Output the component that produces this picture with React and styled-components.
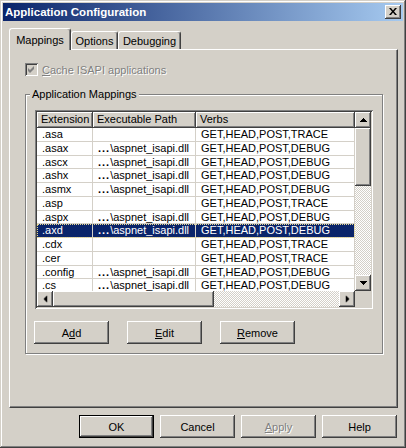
import React from "react";
import styled, { createGlobalStyle } from "styled-components";

const FACE = "#d4d0c8";
const SHADOW = "#808080";
const DARK = "#404040";
const HILITE = "#ffffff";
const SELECT = "#0a246a";

const GlobalStyle = createGlobalStyle`
  html, body {
    margin: 0;
    padding: 0;
    background: ${FACE};
  }
  body {
    font-family: "Liberation Sans", Arial, sans-serif;
    font-size: 11px;
    color: #000;
  }
  * {
    box-sizing: border-box;
  }
`;

const raised = `
  box-shadow: inset -1px -1px ${DARK}, inset 1px 1px ${HILITE}, inset -2px -2px ${SHADOW}, inset 2px 2px ${FACE};
`;

const sunken = `
  box-shadow: inset 1px 1px ${SHADOW}, inset -1px -1px ${HILITE}, inset 2px 2px ${DARK}, inset -2px -2px ${FACE};
`;

const checker = `
  background: repeating-conic-gradient(${FACE} 0 25%, ${HILITE} 0 50%) 0 0 / 2px 2px;
`;

const Window = styled.div`
  width: 406px;
  height: 448px;
  padding: 3px;
  background: ${FACE};
  box-shadow: inset -1px -1px ${DARK}, inset 1px 1px ${FACE}, inset -2px -2px ${SHADOW}, inset 2px 2px ${HILITE};
  display: flex;
  flex-direction: column;
`;

const TitleBar = styled.div`
  height: 18px;
  display: flex;
  align-items: center;
  justify-content: space-between;
  padding: 0 2px;
  background: linear-gradient(to right, #0a246a, #a6caf0);
`;

const TitleText = styled.span`
  color: #fff;
  font-weight: bold;
  font-size: 11.5px;
`;

const CloseButton = styled.div`
  width: 16px;
  height: 14px;
  background: ${FACE};
  ${raised}
  display: flex;
  align-items: center;
  justify-content: center;
  padding-bottom: 1px;
`;

const TabStrip = styled.div`
  display: flex;
  align-items: flex-end;
  height: 21px;
  margin: 7px 0 0 6px;
  position: relative;
  z-index: 1;
`;

const Tab = styled.div`
  width: ${(p) => p.$w}px;
  height: ${(p) => (p.$active ? 22 : 18)}px;
  margin-bottom: ${(p) => (p.$active ? -1 : 0)}px;
  padding-top: ${(p) => (p.$active ? 0 : 1)}px;
  display: flex;
  align-items: center;
  justify-content: center;
  background: ${FACE};
  border-top: 1px solid ${HILITE};
  border-left: 1px solid ${HILITE};
  border-right: 1px solid ${DARK};
  border-radius: 3px 3px 0 0;
  box-shadow: inset -1px 0 ${SHADOW};
`;

const Panel = styled.div`
  width: 389px;
  height: 359px;
  margin-left: 6px;
  border: 1px solid;
  border-color: ${HILITE} ${DARK} ${DARK} ${HILITE};
  box-shadow: inset -1px -1px ${SHADOW};
  padding: 13px 0 0 15px;
`;

const CheckRow = styled.label`
  display: flex;
  align-items: center;
  gap: 4px;
  height: 13px;
  color: ${SHADOW};
  text-shadow: 1px 1px ${HILITE};
`;

const CheckBox = styled.span`
  width: 13px;
  height: 13px;
  flex-shrink: 0;
  background: ${FACE};
  ${sunken}
  display: flex;
  align-items: center;
  justify-content: center;
`;

const GroupBox = styled.fieldset`
  margin: 12px 0 0 0;
  width: 358px;
  min-inline-size: 0;
  padding: 9px;
  border: 1px solid ${SHADOW};
  box-shadow: inset 1px 1px ${HILITE}, 1px 1px ${HILITE};
`;

const GroupLabel = styled.legend`
  padding: 0 2px;
  margin-left: -5px;
  line-height: 13px;
  background: ${FACE};
`;

const ListView = styled.div`
  width: 338px;
  height: 199px;
  padding: 2px;
  background: ${FACE};
  ${sunken}
  display: grid;
  grid-template-columns: 1fr 16px;
  grid-template-rows: 1fr 16px;
`;

const ListBody = styled.div`
  background: #fff;
  overflow: hidden;
  min-width: 0;
  min-height: 0;
`;

const columns = "56px 103px 1fr";

const HeaderRow = styled.div`
  display: grid;
  grid-template-columns: ${columns};
  height: 16px;
`;

const HeaderCell = styled.div`
  background: ${FACE};
  box-shadow: inset -1px -1px ${DARK}, inset 1px 1px ${HILITE}, inset -2px -2px ${SHADOW};
  padding-left: 4px;
  line-height: 15px;
  white-space: nowrap;
  overflow: hidden;
`;

const Row = styled.div`
  display: grid;
  grid-template-columns: ${columns};
  height: 13.75px;
  background: ${(p) => (p.$selected ? SELECT : "#fff")};
  color: ${(p) => (p.$selected ? "#fff" : "#000")};
  outline: ${(p) => (p.$selected ? "1px dotted #e6d890" : "none")};
  outline-offset: -1px;
`;

const Cell = styled.div`
  padding-left: 5px;
  border-right: 1px solid ${FACE};
  border-bottom: 1px solid ${FACE};
  line-height: 12.75px;
  white-space: nowrap;
  overflow: hidden;
`;

const Dots = styled.span`
  font-weight: bold;
  letter-spacing: 1px;
`;

const VScroll = styled.div`
  display: flex;
  flex-direction: column;
  ${checker}
`;

const HScroll = styled.div`
  display: flex;
  ${checker}
`;

const Corner = styled.div`
  background: ${FACE};
`;

const ScrollButton = styled.div`
  width: 16px;
  height: 16px;
  flex-shrink: 0;
  background: ${FACE};
  ${raised}
  display: flex;
  align-items: center;
  justify-content: center;
`;

const Thumb = styled.div`
  flex-shrink: 0;
  background: ${FACE};
  ${raised}
  ${(p) => (p.$vertical ? `height: ${p.$size}px;` : `width: ${p.$size}px;`)}
`;

const Track = styled.div`
  flex: 1;
`;

const ButtonRow = styled.div`
  display: flex;
  gap: ${(p) => p.$gap}px;
  justify-content: ${(p) => (p.$end ? "flex-end" : "flex-start")};
  margin: ${(p) => p.$margin};
`;

const Button = styled.div`
  width: 75px;
  height: 23px;
  display: flex;
  align-items: center;
  justify-content: center;
  background: ${FACE};
  border: ${(p) => (p.$default ? "1px solid #000" : "none")};
  ${raised}
  color: ${(p) => (p.$disabled ? SHADOW : "#000")};
  text-shadow: ${(p) => (p.$disabled ? `1px 1px ${HILITE}` : "none")};
`;

const Arrow = ({ dir = "up" }) => {
  const rot = { up: 0, right: 90, down: 180, left: 270 }[dir];
  return (
    <svg width="7" height="4" viewBox="0 0 7 4" style={{ transform: `rotate(${rot}deg)` }}>
      <path d="M3 0h1v1h1v1h1v1h1v1H0V3h1V2h1V1h1z" fill="#000" />
    </svg>
  );
};

const CloseGlyph = () => (
  <svg width="8" height="7" viewBox="0 0 8 7">
    <path d="M0 0h2l2 2.4L6 0h2L5 3.5 8 7H6L4 4.6 2 7H0l3-3.5z" fill="#000" />
  </svg>
);

const CheckGlyph = () => (
  <svg width="7" height="7" viewBox="0 0 7 7">
    <path d="M0 2l2 2 4-4v3L2 7 0 5z" fill={SHADOW} />
  </svg>
);

const PATH = (
  <>
    <Dots>...</Dots>\aspnet_isapi.dll
  </>
);
const TRACE = "GET,HEAD,POST,TRACE";
const DEBUG = "GET,HEAD,POST,DEBUG";

const mappings = [
  [".asa", false, TRACE],
  [".asax", true, DEBUG],
  [".ascx", true, DEBUG],
  [".ashx", true, DEBUG],
  [".asmx", true, DEBUG],
  [".asp", false, TRACE],
  [".aspx", true, DEBUG],
  [".axd", true, DEBUG, true],
  [".cdx", false, TRACE],
  [".cer", false, TRACE],
  [".config", true, DEBUG],
  [".cs", true, DEBUG],
];

export default function App() {
  return (
    <>
      <GlobalStyle />
      <Window>
        <TitleBar>
          <TitleText>Application Configuration</TitleText>
          <CloseButton>
            <CloseGlyph />
          </CloseButton>
        </TitleBar>

        <TabStrip>
          <Tab $active $w={62}>Mappings</Tab>
          <Tab $w={47}>Options</Tab>
          <Tab $w={63}>Debugging</Tab>
        </TabStrip>

        <Panel>
          <CheckRow>
            <CheckBox>
              <CheckGlyph />
            </CheckBox>
            <span>
              <u>C</u>ache ISAPI applications
            </span>
          </CheckRow>

          <GroupBox>
            <GroupLabel>Application Mappings</GroupLabel>
            <ListView>
              <ListBody>
                <HeaderRow>
                  <HeaderCell>Extension</HeaderCell>
                  <HeaderCell>Executable Path</HeaderCell>
                  <HeaderCell>Verbs</HeaderCell>
                </HeaderRow>
                {mappings.map(([ext, hasPath, verbs, selected]) => (
                  <Row key={ext} $selected={selected}>
                    <Cell>{ext}</Cell>
                    <Cell>{hasPath ? PATH : ""}</Cell>
                    <Cell>{verbs}</Cell>
                  </Row>
                ))}
              </ListBody>
              <VScroll>
                <ScrollButton>
                  <Arrow dir="up" />
                </ScrollButton>
                <Thumb $vertical $size={58} />
                <Track />
                <ScrollButton>
                  <Arrow dir="down" />
                </ScrollButton>
              </VScroll>
              <HScroll>
                <ScrollButton>
                  <Arrow dir="left" />
                </ScrollButton>
                <Thumb $size={161} />
                <Track />
                <ScrollButton>
                  <Arrow dir="right" />
                </ScrollButton>
              </HScroll>
              <Corner />
            </ListView>

            <ButtonRow $gap={18} $margin="12px 0 0 -1px">
              <Button>
                A<u>d</u>d
              </Button>
              <Button>
                <u>E</u>dit
              </Button>
              <Button>
                <u>R</u>emove
              </Button>
            </ButtonRow>
          </GroupBox>
        </Panel>

        <ButtonRow $end $gap={6} $margin="7px 6px 0 0">
          <Button $default>OK</Button>
          <Button>Cancel</Button>
          <Button $disabled>
            <u>A</u>pply
          </Button>
          <Button>Help</Button>
        </ButtonRow>
      </Window>
    </>
  );
}
